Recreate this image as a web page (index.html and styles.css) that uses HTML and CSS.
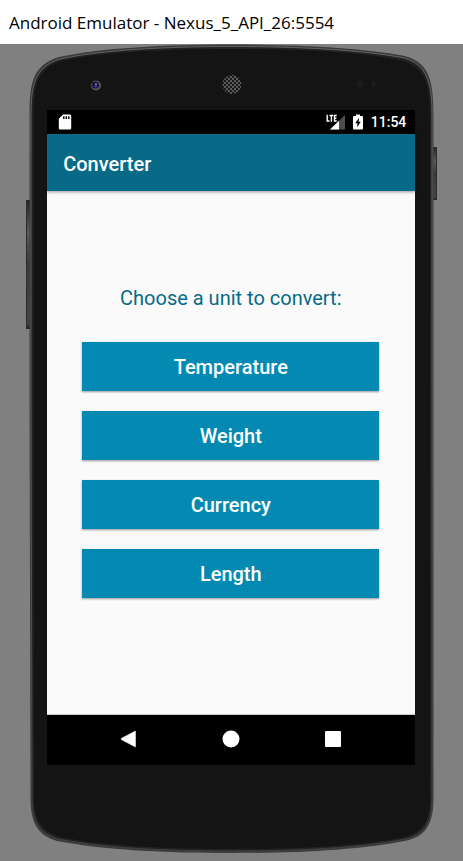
FILE: index.html
```html
<!DOCTYPE html>
<html lang="en">
<head>
<meta charset="utf-8">
<meta name="viewport" content="width=device-width, initial-scale=1">
<title>Android Emulator - Nexus_5_API_26:5554</title>
<link rel="stylesheet" href="styles.css">
</head>
<body>
<header class="window-title">Android Emulator - Nexus_5_API_26:5554</header>
<div class="device">
  <svg class="shell" viewBox="0 44 463 817" preserveAspectRatio="none" aria-hidden="true">
    <defs>
      <pattern id="mesh" width="4" height="4" patternUnits="userSpaceOnUse">
        <rect width="4" height="4" fill="#5a5a5a"/>
        <circle cx="1" cy="1" r="1.100" fill="#111"/>
        <circle cx="3" cy="3" r="1.100" fill="#111"/>
      </pattern>
      <linearGradient id="key" x1="0" y1="0" x2="0" y2="1">
        <stop offset="0" stop-color="#252525"/>
        <stop offset=".25" stop-color="#5a5a5a"/>
        <stop offset=".5" stop-color="#3b3b3b"/>
        <stop offset=".95" stop-color="#454545"/>
        <stop offset="1" stop-color="#222"/>
      </linearGradient>
      <linearGradient id="rim" x1="0" y1="0" x2="0" y2="1">
        <stop offset="0" stop-color="#606163"/>
        <stop offset=".5" stop-color="#57585a"/>
        <stop offset="1" stop-color="#3f3f3f"/>
      </linearGradient>
    </defs>
    <rect x="26" y="200" width="5" height="129" fill="url(#key)"/>
    <rect x="26" y="200" width="1" height="129" fill="#2c2c2c"/>
    <rect x="433" y="147" width="4" height="53" fill="url(#key)"/>
    <rect x="436" y="147" width="1" height="53" fill="#2c2c2c"/>
    <path d="M29.500 400V116C29.500 82 33 65 59 57C100 48 165 44.500 232 44.500S365 48 405 56C430 63 433.500 82 433.500 116V798C433.500 822 427 836 407 840.500C360 850 300 853 232 853S104 850 57 841C37 835 30.500 822 30.500 798Z" fill="#3b3b3c"/>
    <path d="M31 400V116C31 84 35 67 60 59C101 50 165 46.500 232 46.500S364 50 404 58C428 65 432 84 432 116V798C432 821 426 834 406 839C360 848 300 851 232 851S104 848 58 839C39 833 32 821 32 798Z" fill="#222" stroke="url(#rim)" stroke-width="1"/>
    <path d="M33.500 400V116C33.500 86 37 69 61 61C102 52 165 49 232 49S363 52 403 61C426 68 430 86 430 116V798C430 819 424 832 405 837C360 846 300 849 232 849S104 846 60 837C41 831 34 819 34 798Z" fill="#141414"/>
    <circle cx="96" cy="85.500" r="5" fill="#55565b"/>
    <circle cx="95.500" cy="85" r="3.600" fill="#17172c"/>
    <circle cx="95.500" cy="86" r="1.700" fill="#3432a0"/>
    <circle cx="96" cy="84" r=".8" fill="#b7b8de"/>
    <circle cx="232" cy="84.500" r="9.500" fill="url(#mesh)"/>
    <circle cx="360" cy="83.500" r="4" fill="#1c1a1b"/>
    <circle cx="373.500" cy="83.500" r="2.500" fill="#1e1c1c"/>
  </svg>
  <div class="screen">
    <div class="status-bar">
      <svg class="sd" width="14" height="16" viewBox="0 0 14 16" role="img" aria-label="Memory card">
        <path d="M5 0.500H12a1.200 1.200 0 0 1 1.200 1.200V14.300a1.200 1.200 0 0 1-1.200 1.200H2A1.200 1.200 0 0 1 .8 14.300V4.800Z" fill="#fff"/>
        <path d="M5.800 2.300V5M8.300 2.300V5M10.800 2.300V5" stroke="#000" stroke-width="1.400"/>
      </svg>
      <svg class="signal" width="20" height="16" viewBox="0 0 20 16" role="img" aria-label="LTE signal">
        <path d="M19 1V15.500H4Z" fill="#4d4d4d"/>
        <path d="M13 6.800V15.500H4Z" fill="#fff"/>
        <path d="M0 0H11V7L9.500 9H0Z" fill="#000"/>
        <path d="M1.200 .8V7H3.500M3.500 1.500H7.200M5.400 1.500V7.800M10.700 1.500H8.500V7H10.700M8.500 4.200H10.400" fill="none" stroke="#fff" stroke-width="1.400"/>
      </svg>
      <svg class="battery" width="10" height="16" viewBox="0 0 10 16" role="img" aria-label="Battery charging">
        <path d="M3 .5H7V2H9a1 1 0 0 1 1 1V14.500a1 1 0 0 1-1 1H1a1 1 0 0 1-1-1V3A1 1 0 0 1 1 2H3Z" fill="#fff"/>
        <path d="M6 3.800 2.200 9.300H4.300V13.200L7.700 7.700H5.700Z" fill="#000"/>
      </svg>
      <time>11:54</time>
    </div>
    <h1 class="app-bar">Converter</h1>
    <main class="content">
      <h2 class="prompt">Choose a unit to convert:</h2>
      <button class="unit" type="button">Temperature</button>
      <button class="unit" type="button">Weight</button>
      <button class="unit" type="button">Currency</button>
      <button class="unit" type="button">Length</button>
    </main>
    <nav class="nav-bar">
      <button type="button" aria-label="Back"><svg width="18" height="18" viewBox="0 0 18 18"><path d="M15.300 1.200V16.800L1.500 9.600Q.8 9 1.500 8.400Z" fill="#fff" stroke="#fff" stroke-width=".8" stroke-linejoin="round"/></svg></button>
      <button type="button" aria-label="Home"><svg width="18" height="18" viewBox="0 0 18 18"><circle cx="9" cy="9" r="8.500" fill="#fff"/></svg></button>
      <button type="button" aria-label="Overview"><svg width="18" height="18" viewBox="0 0 18 18"><rect x="1" y="1" width="16" height="16" rx="1" fill="#fff"/></svg></button>
    </nav>
  </div>
</div>
</body>
</html>
```
FILE: styles.css
```css
* {
  box-sizing: border-box;
}

body {
  margin: 0;
  min-height: 100vh;
  display: flex;
  flex-direction: column;
  background: #808080;
  font-family: Roboto, "Liberation Sans", sans-serif;
}

.window-title {
  height: 44px;
  padding: 0 9px;
  background: #fff;
  color: #000;
  font: 17px/46px "Open Sans", "Noto Sans", sans-serif;
}

.device {
  position: relative;
  flex: 1;
  display: flex;
  padding: 66px 10.3% 96px 10.2%;
}

.shell {
  position: absolute;
  inset: 0;
  width: 100%;
  height: 100%;
}

.screen {
  position: relative;
  flex: 1;
  display: flex;
  flex-direction: column;
  background: #fafafa;
}

.status-bar {
  height: 24px;
  padding: 0 9px 0 11px;
  display: flex;
  align-items: center;
  background: #000;
  color: #fff;
  font-size: 14px;
  font-weight: 500;
}

.signal {
  margin-left: auto;
}

.battery {
  margin: 0 8px 0 7px;
}

.app-bar {
  margin: 0;
  padding: 3px 16px 0;
  background: #086a87;
  color: #fff;
  font-size: 20px;
  font-weight: 500;
  line-height: 54px;
  box-shadow: 0 1px 3px rgba(0, 0, 0, 0.4);
}

.content {
  flex: 1;
  display: flex;
  flex-direction: column;
  justify-content: center;
  gap: 20px;
  padding: 0 36px 21px 35px;
}

.prompt {
  margin: 0 0 12px;
  color: #086a87;
  font-size: 20px;
  font-weight: 400;
  line-height: 24px;
  text-align: center;
}

.unit {
  height: 49px;
  padding: 1px 0 0;
  border: 0;
  background: #048ab2;
  color: #fff;
  font: 500 20px Roboto, "Liberation Sans", sans-serif;
  box-shadow: 0 1px 2px rgba(0, 0, 0, 0.4);
}

.nav-bar {
  height: 51px;
  display: flex;
  justify-content: center;
  border-top: 1px solid #c4cccc;
  background: #000;
}

.nav-bar button {
  width: 102px;
  padding: 0 0 2px;
  border: 0;
  background: transparent;
  display: flex;
  align-items: center;
  justify-content: center;
}
```
